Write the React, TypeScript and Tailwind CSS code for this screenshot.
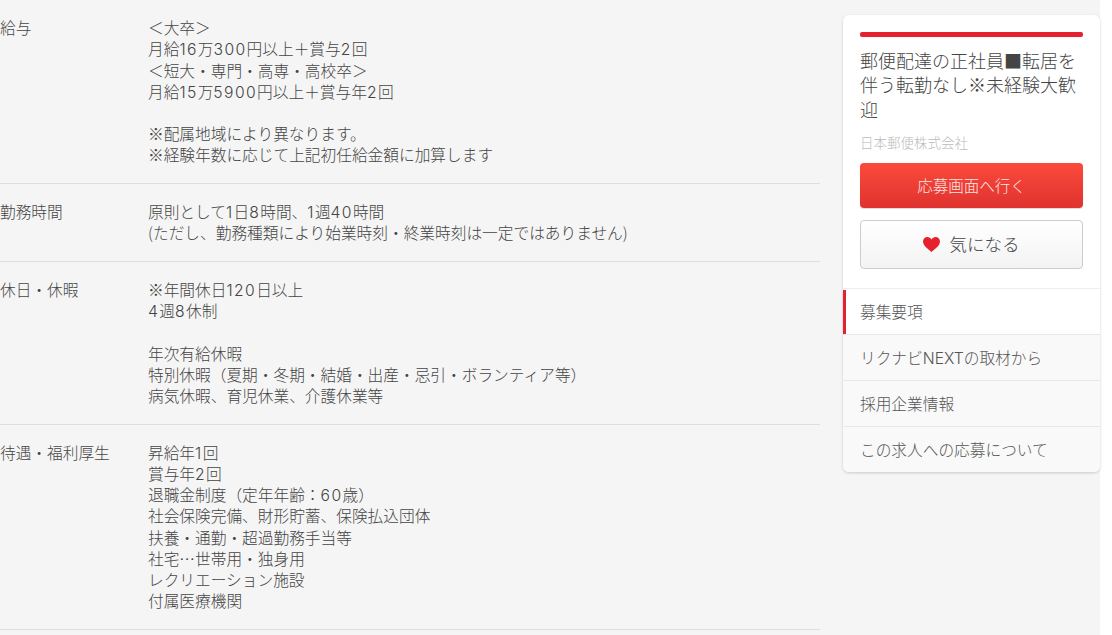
import React from "react";

const rows: { label: string; lines: string[] }[] = [
  {
    label: "給与",
    lines: [
      "＜大卒＞",
      "月給16万300円以上＋賞与2回",
      "＜短大・専門・高専・高校卒＞",
      "月給15万5900円以上＋賞与年2回",
      "",
      "※配属地域により異なります。",
      "※経験年数に応じて上記初任給金額に加算します",
    ],
  },
  {
    label: "勤務時間",
    lines: ["原則として1日8時間、1週40時間", "(ただし、勤務種類により始業時刻・終業時刻は一定ではありません)"],
  },
  {
    label: "休日・休暇",
    lines: [
      "※年間休日120日以上",
      "4週8休制",
      "",
      "年次有給休暇",
      "特別休暇（夏期・冬期・結婚・出産・忌引・ボランティア等）",
      "病気休暇、育児休業、介護休業等",
    ],
  },
  {
    label: "待遇・福利厚生",
    lines: [
      "昇給年1回",
      "賞与年2回",
      "退職金制度（定年年齢：60歳）",
      "社会保険完備、財形貯蓄、保険払込団体",
      "扶養・通勤・超過勤務手当等",
      "社宅…世帯用・独身用",
      "レクリエーション施設",
      "付属医療機関",
    ],
  },
];

const nav = ["リクナビNEXTの取材から", "採用企業情報", "この求人への応募について"];

function Txt({ text }: { text: string }) {
  const parts = text.split(/([0-9]+|[A-Z]+)/);
  return (
    <>
      {parts.map((p, i) =>
        /^[0-9]+$/.test(p) ? (
          <span key={i} className="font-['Inter'] tracking-[1.4px]">{p}</span>
        ) : /^[A-Z]+$/.test(p) ? (
          <span key={i} className="font-['Inter']">{p}</span>
        ) : (
          <span key={i}>{p}</span>
        )
      )}
    </>
  );
}

export default function App() {
  return (
    <div className="w-full h-[635px] bg-white overflow-hidden font-['Noto_Sans_CJK_JP','Noto_Sans',sans-serif] font-light">
      <div className="w-[1100px] h-full bg-[#f5f5f5] flex items-start">
        <div className="w-[820px] shrink-0">
          {rows.map((r) => (
            <div key={r.label} className="flex border-b border-[#dedede] pt-[17.3px] pb-[17.3px] text-[15.7px] leading-[21.2px] text-[#444]">
              <div className="w-[148px] shrink-0">{r.label}</div>
              <div>
                {r.lines.map((l, i) => (
                  <div key={i} className="h-[21.2px] whitespace-nowrap"><Txt text={l} /></div>
                ))}
              </div>
            </div>
          ))}
        </div>
        <div className="ml-[23px] mt-[15px] w-[257px] shrink-0 bg-white rounded-[6px] shadow-[0_1px_3px_rgba(0,0,0,0.18)] overflow-hidden">
          <div className="px-[17px] pt-[17px] pb-[19px]">
            <div className="h-[5px] rounded-[2px] bg-[#e6212f]" />
            <div className="mt-[10.5px] text-[18px] leading-[24.5px] text-[#444]">
              郵便配達の正社員■転居を伴う転勤なし※未経験大歓迎
            </div>
            <div className="mt-[11px] text-[13.5px] leading-[20px] text-[#bbb]">日本郵便株式会社</div>
            <div className="mt-[11px] h-[45px] rounded-[4px] bg-gradient-to-b from-[#fb4a3c] to-[#e0322f] flex items-center justify-center text-[15.5px] text-[#ffe9e5] shadow-[0_1px_1px_rgba(0,0,0,0.15)]">
              応募画面へ行く
            </div>
            <div className="mt-[12px] h-[49px] rounded-[4px] border border-[#ccc] bg-gradient-to-b from-white to-[#f3f3f3] flex items-center justify-center gap-[9px] text-[17.6px] text-[#444]">
              <svg width="17" height="15" viewBox="0 0 17 15" aria-hidden="true">
                <path d="M8.500 15C6 12.800 0 9 0 4.600 0 2 2 0 4.400 0 6.200 0 7.700 1 8.500 2.500 9.300 1 10.800 0 12.600 0 15 0 17 2 17 4.600 17 9 11 12.800 8.500 15Z" fill="#e6212b" />
              </svg>
              <span>気になる</span>
            </div>
          </div>
          <div className="relative h-[46px] pt-[0.6px] border-t border-[#eee] bg-white flex items-center pl-[17px] text-[15.7px] text-[#555]">
            <div className="absolute left-0 top-[1px] bottom-0 w-[3px] bg-[#e6212f]" />
            募集要項
          </div>
          {nav.map((n) => (
            <div key={n} className="h-[46px] pt-[0.6px] border-t border-[#e8e8e8] bg-[#f9f9f9] pl-[17px] text-[15.7px] text-[#555] flex items-center">
              <span><Txt text={n} /></span>
            </div>
          ))}
        </div>
      </div>
    </div>
  );
}
